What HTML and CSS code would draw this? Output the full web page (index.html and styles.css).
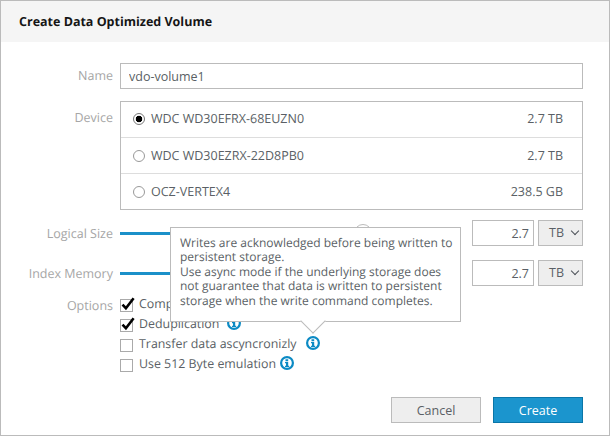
FILE: index.html
```html
<!DOCTYPE html>
<html lang="en">
<head>
    <meta charset="UTF-8">
    <title>Create Data Optimized Volume</title>
    <link rel="stylesheet" href="styles.css">
</head>
<body>
    <svg class="icon-defs" width="0" height="0">
        <symbol id="info" viewBox="0 0 14 14">
            <circle cx="7" cy="7" r="5.9" fill="#fff" stroke="#0b8ac4" stroke-width="2.2"/>
            <path d="M5.5 3.2h2.7v2H5.5zM5 6h3.2v3.7h1V11H5V9.7h1V7.3H5z" fill="#0b8ac4"/>
        </symbol>
        <symbol id="check" viewBox="0 0 14 14">
            <path d="M1.5 7.6l3.4 3.6L12.6 1.2" fill="none" stroke="#000" stroke-width="2.6"/>
        </symbol>
    </svg>

    <div class="modal">
        <h1 class="modal-title">Create Data Optimized Volume</h1>

        <form class="modal-body">
            <div class="row row-name">
                <label class="label">Name</label>
                <input class="text-input" type="text" value="vdo-volume1">
            </div>

            <div class="row row-device">
                <label class="label label-device">Device</label>
                <ul class="device-list">
                    <li class="device device-first">
                        <span class="radio radio-on"></span>
                        <span class="device-name">WDC WD30EFRX-68EUZN0</span>
                        <span class="device-size">2.7 TB</span>
                    </li>
                    <li class="device">
                        <span class="radio"></span>
                        <span class="device-name">WDC WD30EZRX-22D8PB0</span>
                        <span class="device-size">2.7 TB</span>
                    </li>
                    <li class="device">
                        <span class="radio"></span>
                        <span class="device-name">OCZ-VERTEX4</span>
                        <span class="device-size">238.5 GB</span>
                    </li>
                </ul>
            </div>

            <div class="row row-size">
                <label class="label">Logical Size</label>
                <div class="slider">
                    <div class="slider-fill"></div>
                    <div class="slider-thumb"></div>
                </div>
                <input class="num-input" type="text" value="2.7">
                <div class="unit">TB <span class="chevron"></span></div>
            </div>

            <div class="row row-size">
                <label class="label">Index Memory</label>
                <div class="slider">
                    <div class="slider-fill"></div>
                    <div class="slider-thumb"></div>
                </div>
                <input class="num-input" type="text" value="2.7">
                <div class="unit">TB <span class="chevron"></span></div>
            </div>

            <div class="row row-options">
                <label class="label">Options</label>
                <div class="options">
                    <div class="option">
                        <span class="checkbox"><svg class="check"><use href="#check"/></svg></span>
                        <span>Compression</span>
                        <svg class="info"><use href="#info"/></svg>
                    </div>
                    <div class="option">
                        <span class="checkbox"><svg class="check"><use href="#check"/></svg></span>
                        <span>Deduplication</span>
                        <svg class="info"><use href="#info"/></svg>
                    </div>
                    <div class="option">
                        <span class="checkbox"></span>
                        <span>Transfer data ascyncronizly</span>
                        <svg class="info info-wide"><use href="#info"/></svg>
                    </div>
                    <div class="option">
                        <span class="checkbox"></span>
                        <span>Use 512 Byte emulation</span>
                        <svg class="info info-tight"><use href="#info"/></svg>
                    </div>
                </div>
            </div>

            <div class="modal-footer">
                <button class="btn" type="button">Cancel</button>
                <button class="btn btn-primary" type="button">Create</button>
            </div>
        </form>

        <div class="tooltip">
            Writes are acknowledged before being written to<br>
            persistent storage.<br>
            Use async mode if the underlying storage does<br>
            not guarantee that data is written to persistent<br>
            storage when the write command completes.
        </div>
    </div>
</body>
</html>
```

FILE: styles.css
```css
* {
    box-sizing: border-box;
}

body {
    margin: 0;
    font-family: 'Open Sans', sans-serif;
    font-size: 12.5px;
    text-rendering: geometricPrecision;
    color: #5a5f65;
    background-color: #fff;
}

.icon-defs {
    position: absolute;
}

.modal {
    position: relative;
    width: 610px;
    height: 436px;
    border: 1px solid #bbb;
    overflow: hidden;
}

.modal-title {
    margin: 0;
    height: 41px;
    padding: 0 18px;
    line-height: 41px;
    font-size: 12.5px;
    font-weight: 700;
    color: #151515;
    background-color: #f5f5f5;
}

.modal-body {
    padding: 21px 26px 0 0;
}

.row {
    display: flex;
    margin-bottom: 12px;
}

.label {
    flex: none;
    width: 112px;
    margin-right: 7px;
    text-align: right;
    color: #a6a6a6;
    line-height: 25px;
}

.label-device {
    line-height: 33px;
}

.text-input,
.num-input {
    height: 26px;
    border: 1px solid #bbb;
    font: inherit;
    color: inherit;
    outline: none;
}

.text-input {
    flex: 1;
    padding: 0 8px;
}

.device-list {
    flex: 1;
    margin: 0;
    padding: 0;
    list-style: none;
    border: 1px solid #bbb;
}

.device {
    display: flex;
    align-items: center;
    height: 36px;
    padding: 0 19px 0 12px;
    border-bottom: 1px solid #ddd;
}

.device-first {
    padding-bottom: 2px;
}

.device:last-child {
    border-bottom: none;
    height: 35px;
}

.radio {
    width: 12px;
    height: 12px;
    margin-right: 6px;
    border: 1px solid #999;
    border-radius: 50%;
    background-color: #fff;
}

.radio-on {
    border-color: #777;
    background: radial-gradient(circle, #000 0, #000 3px, #fff 3.6px);
}

.device-name {
    flex: 1;
}

.row-device {
    margin-bottom: 10px;
}

.row-size {
    align-items: center;
    margin-bottom: 14px;
}

.slider {
    position: relative;
    flex: 1;
    height: 3px;
    margin-right: 20px;
    background-color: #bbb;
}

.slider-fill {
    width: 243px;
    height: 100%;
    background-color: #1b90c9;
}

.slider-thumb {
    position: absolute;
    left: 234px;
    top: -8px;
    width: 18px;
    height: 18px;
    border: 1px solid #bbb;
    border-radius: 50%;
    background-color: #fff;
}

.num-input {
    flex: none;
    width: 62px;
    padding: 0 4px;
    text-align: right;
}

.unit {
    flex: none;
    width: 45px;
    height: 26px;
    margin-left: 4px;
    padding-left: 10px;
    line-height: 24px;
    border: 1px solid #bbb;
    background-color: #eee;
}

.chevron {
    display: inline-block;
    width: 6px;
    height: 6px;
    margin: 0 0 3px 5px;
    border-right: 1px solid #4d5258;
    border-bottom: 1px solid #4d5258;
    transform: rotate(45deg);
}

.options {
    flex: 1;
    font-size: 12.4px;
}

.row-options {
    margin-top: -7px;
    margin-bottom: 0;
}

.row-options .label {
    line-height: 20px;
    margin-top: 3px;
}

.option {
    display: flex;
    align-items: center;
    height: 20px;
}

.checkbox {
    flex: none;
    width: 13px;
    height: 13px;
    margin: 4px 6px 0 0;
    border: 1px solid #aaa;
    background-color: #fff;
}

.check {
    display: block;
    width: 14px;
    height: 14px;
    margin: -3px 0 0 0;
}

.info {
    flex: none;
    width: 14px;
    height: 14px;
    margin-left: 8px;
}

.info-wide {
    margin-left: 9px;
}

.info-tight {
    margin-left: 4px;
}

.modal-footer {
    display: flex;
    justify-content: flex-end;
    gap: 12px;
    margin-top: 24px;
}

.btn {
    width: 90px;
    height: 26px;
    padding: 0;
    border: 1px solid #bbb;
    background-color: #eee;
    font: inherit;
    color: #5a5f65;
}

.btn-primary {
    border-color: #0a76a8;
    background-color: #1b95ce;
    color: #fff;
}

.tooltip {
    position: absolute;
    left: 169px;
    top: 226px;
    width: 291px;
    height: 95px;
    padding: 8px 9px;
    font-size: 12px;
    line-height: 14.4px;
    white-space: nowrap;
    border: 1px solid #bbb;
    background-color: #fff;
}

.tooltip::after {
    content: "";
    position: absolute;
    left: 133px;
    bottom: -9px;
    width: 17px;
    height: 17px;
    border-right: 1px solid #bbb;
    border-bottom: 1px solid #bbb;
    background-color: #fff;
    transform: rotate(45deg);
}
```
